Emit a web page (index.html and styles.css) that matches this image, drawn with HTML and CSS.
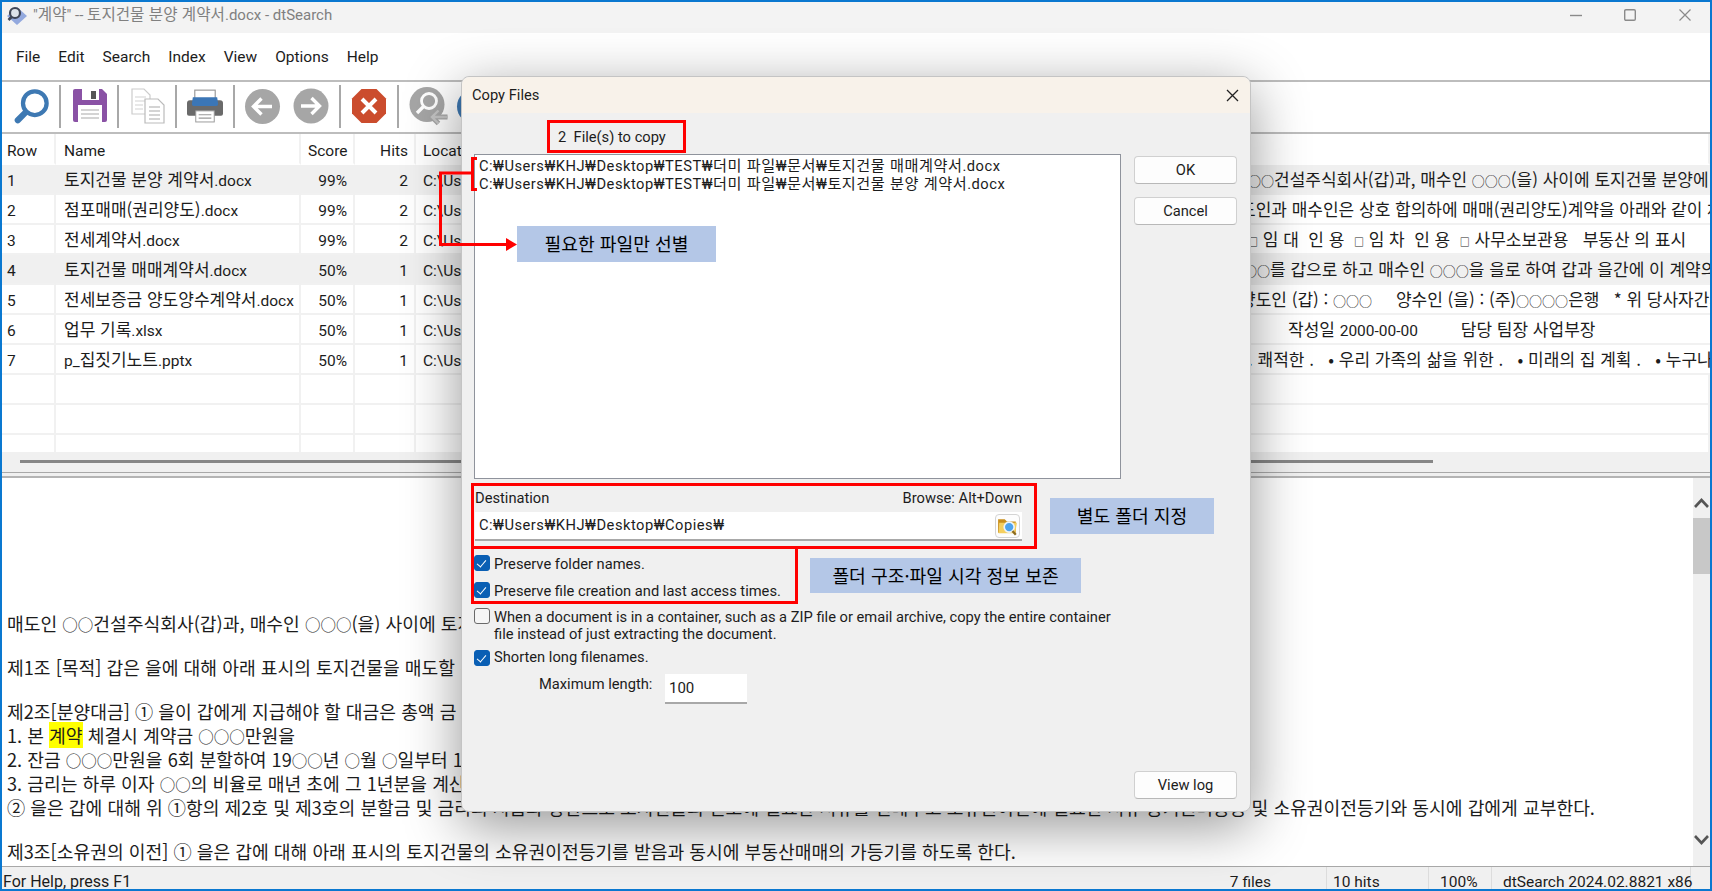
FILE: index.html
```html
<!DOCTYPE html>
<html lang="ko">
<head>
    <meta charset="UTF-8">
    <title>dtSearch - Copy Files</title>
    <link rel="stylesheet" href="styles.css">
</head>
<body>
<div class="window">

    <div class="titlebar">
        <svg class="app-icon" width="20" height="19" viewBox="0 0 20 19">
            <path d="M10 1L20 10L10 19L0 10Z" fill="#93a9de"/>
            <circle cx="8" cy="7" r="5" fill="#dde3ea" stroke="#3f4656" stroke-width="2.2"/>
            <line x1="4.500" y1="11" x2="1.500" y2="14" stroke="#3f4656" stroke-width="2.600"/>
        </svg>
        <span class="title-text">"<span class="ko">계약</span>" -- <span class="ko">토지건물 분양 계약서</span>.docx - dtSearch</span>
        <div class="win-controls">
            <svg width="12" height="12" viewBox="0 0 12 12"><line x1="0" y1="6.5" x2="12" y2="6.5" stroke="#8a8a8a" stroke-width="1.4"/></svg>
            <svg class="win-max" width="12" height="12" viewBox="0 0 12 12"><rect x="0.7" y="0.7" width="10.6" height="10.6" rx="1.2" fill="none" stroke="#8a8a8a" stroke-width="1.4"/></svg>
            <svg class="win-close" width="12" height="12" viewBox="0 0 12 12"><path d="M0.5 0.5L11.5 11.5M11.5 0.5L0.5 11.5" stroke="#8a8a8a" stroke-width="1.2"/></svg>
        </div>
    </div>

    <div class="menubar">
        <span>File</span><span>Edit</span><span>Search</span><span>Index</span><span>View</span><span>Options</span><span>Help</span>
    </div>

    <div class="toolbar">
        <svg width="35" height="37" viewBox="0 0 37 37">
            <circle cx="22" cy="15" r="12.5" fill="none" stroke="#3e79b3" stroke-width="4.5"/>
            <line x1="12" y1="25" x2="4" y2="33" stroke="#3e79b3" stroke-width="6.5" stroke-linecap="round"/>
        </svg>
        <i class="sep"></i>
        <svg width="36" height="34" viewBox="-2 0 36 34">
            <path d="M2 0H29L34 5V31a2 2 0 0 1-2 2H2a2 2 0 0 1-2-2V2a2 2 0 0 1 2-2z" fill="#8a52a5"/>
            <rect x="9" y="0" width="17" height="11" fill="#fff"/>
            <rect x="18" y="2" width="5" height="8" fill="#555"/>
            <rect x="5" y="16" width="24" height="17" fill="#fff"/>
            <path d="M8 21H26M8 25H26M8 29H26" stroke="#aaa" stroke-width="1.2"/>
        </svg>
        <i class="sep"></i>
        <svg width="36" height="36" viewBox="-2 0 36 36">
            <path d="M1 1H13L19 7V26H1Z" fill="#fff" stroke="#ccc" stroke-width="1.2"/>
            <path d="M4 9H15M4 13H15M4 17H12M4 21H12" stroke="#d2d2d2" stroke-width="1.2"/>
            <path d="M14 11H27L33 17V35H14Z" fill="#fff" stroke="#bbb" stroke-width="1.2"/>
            <path d="M18 19H29M18 23H29M18 27H29M18 31H29" stroke="#aaa" stroke-width="1.2"/>
        </svg>
        <i class="sep"></i>
        <svg width="36" height="34" viewBox="0 0 37 34">
            <rect x="8" y="0.7" width="21" height="12" fill="#fff" stroke="#999" stroke-width="1.2"/>
            <path d="M3 11H34a3 3 0 0 1 3 3V25a2 2 0 0 1-2 2H2a2 2 0 0 1-2-2V14a3 3 0 0 1 3-3z" fill="#6a6a6a"/>
            <path d="M6 8H31L32 15a2 2 0 0 1-2 2H7a2 2 0 0 1-2-2Z" fill="#3b76b6"/>
            <rect x="9" y="22" width="19" height="11.4" fill="#fff" stroke="#999" stroke-width="1"/>
            <path d="M12 26H25M12 29.500H25" stroke="#999" stroke-width="1.2"/>
        </svg>
        <i class="sep"></i>
        <svg width="35" height="35" viewBox="0 0 35 35">
            <circle cx="17.500" cy="17.500" r="17.500" fill="#a6a6a6"/>
            <path d="M27 17.500H9M16.500 9.500L8.500 17.500L16.500 25.500" fill="none" stroke="#fff" stroke-width="3.4"/>
        </svg>
        <svg class="tool-next" width="36" height="36" viewBox="0 0 36 36">
            <circle cx="18" cy="18" r="17.500" fill="#a6a6a6"/>
            <path d="M8 18H26M18.500 10L26.500 18L18.500 26" fill="none" stroke="#fff" stroke-width="3.4"/>
        </svg>
        <i class="sep"></i>
        <svg width="36" height="36" viewBox="0 0 36 36">
            <path d="M10.500 1H25.500L35 10.500V25.500L25.500 35H10.500L1 25.500V10.500Z" fill="#cb4c2d"/>
            <path d="M11 11L25 25M25 11L11 25" stroke="#fff" stroke-width="4"/>
        </svg>
        <i class="sep"></i>
        <svg width="39" height="38" viewBox="0 0 39 38">
            <circle cx="18" cy="17.500" r="17.500" fill="#a6a6a6"/>
            <circle cx="20" cy="14" r="7.500" fill="none" stroke="#fff" stroke-width="2.800"/>
            <line x1="14.500" y1="19.500" x2="8" y2="26" stroke="#fff" stroke-width="3.400"/>
            <path d="M38.500 30H23M29.500 23.500L23 30L29.500 36.500" fill="none" stroke="#a6a6a6" stroke-width="5"/>
            <path d="M38.500 30H23M29.500 23.500L23 30L29.500 36.500" fill="none" stroke="#c4c4c4" stroke-width="2.400"/>
        </svg>
        <svg class="tool-more" width="35" height="35" viewBox="0 0 35 35"><circle cx="17.500" cy="17.500" r="17.500" fill="#3e79b3"/></svg>
    </div>

    <div class="results">
        <table>
            <colgroup>
                <col class="col-row"><col class="col-name"><col class="col-score"><col class="col-hits"><col class="col-loc"><col>
            </colgroup>
            <thead>
                <tr><th>Row</th><th>Name</th><th class="num">Score</th><th class="num">Hits</th><th>Location</th><th></th></tr>
            </thead>
            <tbody>
                <tr class="shade"><td>1</td><td><span class="ko">토지건물 분양 계약서</span>.docx</td><td class="num">99%</td><td class="num">2</td><td>C:\Users\KHJ\Desktop\TEST</td><td class="hit hit-1"><span class="o">○○</span>건설주식회사(갑)과, 매수인 <span class="o">○○○</span>(을) 사이에 토지건물 분양에 관하여</td></tr>
                <tr><td>2</td><td><span class="ko">점포매매(권리양도)</span>.docx</td><td class="num">99%</td><td class="num">2</td><td>C:\Users\KHJ\Desktop\TEST</td><td class="hit hit-2">도인과 매수인은 상호 합의하에 매매(권리양도)계약을 아래와 같이 체결한다</td></tr>
                <tr><td>3</td><td><span class="ko">전세계약서</span>.docx</td><td class="num">99%</td><td class="num">2</td><td>C:\Users\KHJ\Desktop\TEST</td><td class="hit hit-3"><small>□</small> 임 대  인 용  <small>□</small> 임 차  인 용  <small>□</small> 사무소보관용   부동산 의 표시</td></tr>
                <tr class="shade"><td>4</td><td><span class="ko">토지건물 매매계약서</span>.docx</td><td class="num">50%</td><td class="num">1</td><td>C:\Users\KHJ\Desktop\TEST</td><td class="hit hit-4"><span class="o">○○</span>를 갑으로 하고 매수인 <span class="o">○○○</span>을 을로 하여 갑과 을간에 이 계약의 내용</td></tr>
                <tr><td>5</td><td><span class="ko">전세보증금 양도양수계약서</span>.docx</td><td class="num">50%</td><td class="num">1</td><td>C:\Users\KHJ\Desktop\TEST</td><td class="hit hit-5">양도인 (갑) : <span class="o">○○○</span>     양수인 (을) : (주)<span class="o">○○○○</span>은행   * 위 당사자간의</td></tr>
                <tr><td>6</td><td><span class="ko">업무 기록</span>.xlsx</td><td class="num">50%</td><td class="num">1</td><td>C:\Users\KHJ\Desktop\TEST</td><td class="hit hit-6">작성일 <span class="lat">2000-00-00</span>         담당 팀장 사업부장</td></tr>
                <tr><td>7</td><td>p_<span class="ko">집짓기노트</span>.pptx</td><td class="num">50%</td><td class="num">1</td><td>C:\Users\KHJ\Desktop\TEST</td><td class="hit hit-7">. 쾌적한 .   • 우리 가족의 삶을 위한 .   • 미래의 집 계획 .   • 누구나</td></tr>
                <tr><td></td><td></td><td></td><td></td><td></td><td></td></tr>
                <tr><td></td><td></td><td></td><td></td><td></td><td></td></tr>
                <tr><td></td><td></td><td></td><td></td><td></td><td></td></tr>
            </tbody>
        </table>
    </div>
    <div class="hscroll"><div class="hscroll-thumb"></div></div>
    <div class="splitter"></div>

    <div class="preview">
        <div class="preview-text">
            <p>매도인 <span class="o">○○</span>건설주식회사(갑)과, 매수인 <span class="o">○○○</span>(을) 사이에 토지건물 분양에 관하여 다음과 같이 계약을 체결한다.</p>
            <p>제1조 [목적] 갑은 을에 대해 아래 표시의 토지건물을 매도할 것을 약정하고 을은 이를 매수한다.</p>
            <p>제2조[분양대금] ① 을이 갑에게 지급해야 할 대금은 총액 금 <span class="o">○○○</span>만원으로 하고 다음과 같이 지급한다.<br>
            1. 본 <mark>계약</mark> 체결시 계약금 <span class="o">○○○</span>만원을<br>
            2. 잔금 <span class="o">○○○</span>만원을 6회 분할하여 19<span class="o">○○</span>년 <span class="o">○</span>월 <span class="o">○</span>일부터 19<span class="o">○○</span>년 <span class="o">○</span>월 <span class="o">○</span>일까지 지급한다.<br>
            3. 금리는 하루 이자 <span class="o">○○</span>의 비율로 매년 초에 그 1년분을 계산하여 지급한다.<br>
            ② 을은 갑에 대해 위 ①항의 제2호 및 제3호의 분할금 및 금리의 지급과 상환으로 토지건물의 인도에 필요한 서류를 건네주고 소유권이전에 필요한 서류 등기권리증등 및 소유권이전등기와 동시에 갑에게 교부한다.</p>
            <p>제3조[소유권의 이전] ① 을은 갑에 대해 아래 표시의 토지건물의 소유권이전등기를 받음과 동시에 부동산매매의 가등기를 하도록 한다.</p>
        </div>
        <div class="vscroll">
            <svg class="vscroll-up" width="17" height="12" viewBox="0 0 17 12"><path d="M2 10L8.500 3L15 10" fill="none" stroke="#555" stroke-width="2.600"/></svg>
            <div class="vscroll-thumb"></div>
            <svg class="vscroll-down" width="17" height="12" viewBox="0 0 17 12"><path d="M2 2L8.500 9L15 2" fill="none" stroke="#555" stroke-width="2.600"/></svg>
        </div>
    </div>

    <div class="statusbar">
        <span class="status-help">For Help, press F1</span>
        <span class="status-files">7 files</span>
        <span class="status-hits">10 hits</span>
        <span class="status-zoom">100%</span>
        <span class="status-ver">dtSearch 2024.02.8821 x86</span>
    </div>

    <div class="dialog">
        <div class="dialog-title">
            <span>Copy Files</span>
            <svg width="13" height="13" viewBox="0 0 13 13"><path d="M1 1L12 12M12 1L1 12" stroke="#222" stroke-width="1.300"/></svg>
        </div>
        <div class="dialog-body">
            <div class="dialog-main">
                <div class="count-row"><span class="count-box">2&nbsp; File(s) to copy</span></div>
                <div class="file-list">
                    <div>C:₩Users₩KHJ₩Desktop₩TEST₩<span class="ko">더미 파일</span>₩<span class="ko">문서</span>₩<span class="ko">토지건물 매매계약서</span>.docx</div>
                    <div>C:₩Users₩KHJ₩Desktop₩TEST₩<span class="ko">더미 파일</span>₩<span class="ko">문서</span>₩<span class="ko">토지건물 분양 계약서</span>.docx</div>
                </div>
                <div class="dest-group">
                    <div class="dest-labels"><span>Destination</span><span>Browse: Alt+Down</span></div>
                    <div class="dest-input">
                        <span class="dest-path">C:₩Users₩KHJ₩Desktop₩Copies₩</span>
                        <span class="browse-btn">
                            <svg width="21" height="20" viewBox="0 0 19 18">
                                <path d="M1 3H7L9 5H17V15H1Z" fill="#c98f1c"/>
                                <path d="M2 6H18L16.500 15.500H1.500Z" fill="#f4cf5f"/>
                                <circle cx="11" cy="10" r="4.500" fill="#4da3ee" stroke="#eaf3fb" stroke-width="1.500"/>
                                <line x1="14" y1="13.500" x2="17" y2="17" stroke="#8a6a20" stroke-width="2"/>
                            </svg>
                        </span>
                    </div>
                </div>
                <div class="preserve-group">
                    <label class="check-row"><span class="check on"></span>Preserve folder names.</label>
                    <label class="check-row"><span class="check on"></span>Preserve file creation and last access times.</label>
                </div>
                <label class="check-row check-wrap"><span class="check"></span><span>When a document is in a container, such as a ZIP file or email archive, copy the entire container<br>file instead of just extracting the document.</span></label>
                <label class="check-row check-short"><span class="check on"></span>Shorten long filenames.</label>
                <div class="maxlen-row">
                    <span class="maxlen-label">Maximum length:</span>
                    <span class="maxlen-input">100</span>
                </div>
            </div>
            <div class="dialog-buttons">
                <button>OK</button>
                <button>Cancel</button>
                <button class="btn-log">View log</button>
            </div>
        </div>
        <div class="note note-select">필요한 파일만 선별</div>
        <div class="note note-folder">별도 폴더 지정</div>
        <div class="note note-keep">폴더 구조·파일 시각 정보 보존</div>
    </div>

    <svg class="callout-lines" width="1712" height="891" viewBox="0 0 1712 891">
        <path d="M477 158.500H472.500V189.500H477" fill="none" stroke="#f00" stroke-width="3"/>
        <path d="M472 173H440.500V244.500H508" fill="none" stroke="#f00" stroke-width="3"/>
        <path d="M506 238L517 244.500L506 251Z" fill="#f00"/>
    </svg>
</div>
</body>
</html>
```

FILE: styles.css
```css
body {
    margin: 0;
    background-color: #fff;
    font-family: Roboto, "Noto Sans CJK KR", sans-serif;
    font-size: 15.5px;
    color: #1c1c1c;
}

.ko {
    font-family: "Noto Sans CJK KR", sans-serif;
    font-size: 17px;
    line-height: 1;
}

.o {
    font-family: "Noto Sans CJK KR", sans-serif;
    font-size: 15.5px;
    line-height: 1;
}

.lat {
    font-family: Roboto, sans-serif;
    font-size: 15.5px;
    line-height: 1;
}

.window {
    position: relative;
    width: 1712px;
    height: 891px;
    box-sizing: border-box;
    border: 2px solid #0a78d0;
    display: flex;
    flex-direction: column;
    overflow: hidden;
}

/* title + menu */
.titlebar {
    height: 31px;
    flex: none;
    box-sizing: border-box;
    background-color: #f3f3f3;
    display: flex;
    align-items: center;
    padding: 0 19px 5px 5px;
    color: #808080;
    font-size: 15px;
}
.title-text {
    margin-left: 6px;
    white-space: pre;
}
.title-text .ko {
    font-size: 15.6px;
}
.win-controls {
    margin-left: auto;
    display: flex;
    align-items: center;
}
.win-max {
    margin-left: 42px;
}
.win-close {
    margin-left: 43px;
}

.menubar {
    height: 49px;
    flex: none;
    box-sizing: border-box;
    border-bottom: 2px solid #bdbdbd;
    display: flex;
    align-items: center;
    gap: 18px;
    padding-left: 14px;
}

.toolbar {
    height: 52px;
    flex: none;
    box-sizing: border-box;
    border-bottom: 2px solid #bdbdbd;
    display: flex;
    align-items: center;
    padding: 0 0 2px 12px;
}
.toolbar svg {
    overflow: visible;
}
.sep {
    width: 2px;
    height: 43px;
    background-color: #a8a8a8;
    margin: 0 10px;
}
.tool-next {
    margin-left: 13px;
}
.tool-more {
    margin-left: 9px;
}

/* results list */
.results {
    height: 318px;
    flex: none;
    overflow: hidden;
}
table {
    width: 1708px;
    table-layout: fixed;
    border-collapse: separate;
    border-spacing: 0;
}
.col-row { width: 54px; }
.col-name { width: 245px; }
.col-score { width: 54px; }
.col-hits { width: 61px; }
.col-loc { width: 824px; }

th, td {
    height: 24px;
    padding: 4px 7px 0;
    line-height: 24px;
    font-weight: normal;
    text-align: left;
    white-space: pre;
    overflow: hidden;
    border-right: 2px solid #f1f1f1;
    border-bottom: 2px solid #f1f1f1;
}
th {
    padding-top: 5px;
    border-bottom-color: transparent;
}
td:first-child, th:first-child {
    padding-left: 5px;
}
td:nth-child(2), th:nth-child(2) {
    padding-left: 8px;
}
.num {
    text-align: right;
    padding-right: 6px;
}
.shade td {
    background-color: #f0f0f0;
    border-right-color: #f0f0f0;
}
.hit {
    font-family: "Noto Sans CJK KR", sans-serif;
    font-size: 17px;
    height: 27px;
    line-height: 27px;
    padding: 0 0 1px;
    border-right: 0;
}
.hit .o {
    font-size: 13px;
}
.hit small {
    font-size: 10px;
    font-weight: bold;
    line-height: 1;
}
.hit-1 { padding-left: 8px; }
.hit-2 { padding-left: 0; }
.hit-3 { padding-left: 8px; }
.hit-4 { padding-left: 4px; }
.hit-5 { padding-left: 0; }
.hit-6 { padding-left: 48px; }
.hit-7 { padding-left: 8px; }

.hscroll {
    height: 20px;
    flex: none;
    background-color: #f0f0f0;
    padding-left: 18px;
    box-sizing: border-box;
    padding-top: 8px;
}
.hscroll-thumb {
    width: 1413px;
    height: 3px;
    background-color: #868686;
}
.splitter {
    height: 6px;
    flex: none;
    box-sizing: border-box;
    background-color: #f0f0f0;
    border-top: 1px solid #a8a8a8;
    border-bottom: 2px solid #b4b4b4;
}

/* bottom preview */
.preview {
    flex: 1;
    display: flex;
    min-height: 0;
}
.preview-text {
    flex: 1;
    padding: 133px 0 0 5px;
    font-family: "Noto Sans CJK KR", sans-serif;
    font-size: 18.2px;
    line-height: 24px;
    white-space: nowrap;
    overflow: hidden;
}
.preview-text p {
    margin: 0 0 20px;
}
mark {
    background-color: #ffff00;
    color: inherit;
}
.vscroll {
    width: 17px;
    flex: none;
    background-color: #f0f0f0;
    display: flex;
    flex-direction: column;
}
.vscroll-up {
    margin-top: 19px;
}
.vscroll-thumb {
    height: 56px;
    margin-top: 9px;
    background-color: #c8c8c8;
}
.vscroll-down {
    margin-top: auto;
    margin-bottom: 20px;
}

.statusbar {
    height: 23px;
    flex: none;
    box-sizing: border-box;
    border-top: 1px solid #a8a8a8;
    background-color: #f0f0f0;
    display: flex;
    overflow: hidden;
    line-height: 30px;
    white-space: nowrap;
}
.statusbar span {
    box-sizing: border-box;
    flex: none;
    border-right: 1px solid #dcdcdc;
}
.statusbar .status-help {
    width: 1215px;
    padding-left: 1px;
    border-right: 0;
    font-size: 16px;
}
.status-files { width: 110px; text-align: right; padding-right: 55px; }
.status-hits { width: 102px; padding-left: 6px; }
.status-zoom { width: 63px; padding-left: 11px; }
.status-ver { width: 199px; padding-left: 11px; }

/* copy dialog */
.dialog {
    position: absolute;
    left: 459px;
    top: 74px;
    width: 790px;
    height: 736px;
    box-sizing: border-box;
    background-color: #f0f0f0;
    border: 1px solid #c4c4c4;
    border-radius: 8px;
    box-shadow: 0 14px 56px rgba(0, 0, 0, 0.42);
    font-size: 14.7px;
}
.dialog-title {
    height: 36px;
    background-color: #f8f2ea;
    border-radius: 8px 8px 0 0;
    display: flex;
    align-items: center;
    justify-content: space-between;
    padding: 0 11px 0 10px;
}
.dialog-body {
    display: grid;
    grid-template-columns: 647px 103px;
    column-gap: 13px;
    padding-left: 12px;
    height: 699px;
}
.dialog-main {
    display: flex;
    flex-direction: column;
    align-items: flex-start;
}
.count-row {
    height: 41px;
}
.count-box {
    display: block;
    box-sizing: border-box;
    width: 139px;
    height: 33px;
    margin: 7px 0 0 73px;
    border: 3px solid #f00;
    padding-left: 8px;
    line-height: 29px;
}
.file-list {
    width: 647px;
    height: 325px;
    box-sizing: border-box;
    background-color: #fff;
    border: 1px solid #8f939c;
    padding: 2px 4px;
    line-height: 18px;
    letter-spacing: 0.5px;
    white-space: nowrap;
}
.file-list .ko {
    font-size: 15.2px;
}

.dest-group {
    box-sizing: border-box;
    width: 566px;
    height: 66px;
    margin: 4px 0 0 -3px;
    border: 3px solid #f00;
    padding: 0 12px 0 1px;
}
.dest-labels {
    height: 26px;
    box-sizing: border-box;
    padding-bottom: 2px;
    display: flex;
    align-items: center;
    justify-content: space-between;
}
.dest-input {
    height: 29px;
    box-sizing: border-box;
    background-color: #fff;
    border-bottom: 2px solid #a8a8a8;
    display: flex;
    align-items: center;
    justify-content: space-between;
    padding: 0 2px 2px 4px;
}
.dest-path {
    letter-spacing: 0.5px;
}
.browse-btn {
    box-sizing: border-box;
    width: 25px;
    height: 24px;
    margin-top: 3px;
    background-color: #fdfdfd;
    border: 1px solid #d4d4d4;
    border-radius: 4px;
    display: flex;
    align-items: center;
    justify-content: center;
}

.preserve-group {
    box-sizing: border-box;
    width: 327px;
    height: 55px;
    margin-left: -3px;
    border: 3px solid #f00;
    border-top: 0;
    padding-top: 7px;
    display: flex;
    flex-direction: column;
    gap: 10px;
}
.check-row {
    display: flex;
    align-items: center;
    gap: 4px;
    height: 17px;
    line-height: 17px;
    white-space: nowrap;
}
.check {
    box-sizing: border-box;
    width: 16px;
    height: 16px;
    flex: none;
    margin-top: -3px;
    border-radius: 3px;
    border: 1px solid #6a6a6a;
    background-color: #f6f6f6;
    position: relative;
}
.check.on {
    background-color: #0a5fb4;
    border-color: #0a5fb4;
}
.check.on::after {
    content: "";
    position: absolute;
    left: 4px;
    top: 2px;
    width: 4px;
    height: 8px;
    border: solid #fff;
    border-width: 0 1.4px 1.4px 0;
    transform: rotate(40deg);
}
.check-wrap {
    height: 34px;
    margin-top: 5px;
    align-items: flex-start;
}
.check-wrap .check {
    margin-top: -1px;
}
.check-short {
    margin-top: 6px;
}
.check-short .check {
    margin-top: 0;
}
.maxlen-row {
    display: flex;
    align-items: flex-start;
    margin-top: 8px;
    padding-left: 65px;
}
.maxlen-label {
    width: 126px;
    line-height: 20px;
}
.maxlen-input {
    box-sizing: border-box;
    width: 82px;
    height: 30px;
    background-color: #fff;
    border-bottom: 2px solid #a8a8a8;
    padding: 1px 0 0 4px;
    line-height: 26px;
    font-size: 15px;
}

.dialog-buttons {
    display: flex;
    flex-direction: column;
    padding-top: 43px;
    padding-bottom: 13px;
}
button {
    box-sizing: border-box;
    width: 103px;
    height: 28px;
    margin-bottom: 13px;
    background-color: #fdfdfd;
    border: 1px solid #d0d0d0;
    border-bottom-color: #b8b8b8;
    border-radius: 4px;
    font-family: inherit;
    font-size: 14.7px;
    color: inherit;
}
.btn-log {
    margin-top: auto;
    margin-bottom: 0;
}

/* blue callouts drawn on top of the dialog */
.note {
    position: absolute;
    box-sizing: border-box;
    padding-bottom: 2px;
    display: flex;
    align-items: center;
    justify-content: center;
    background-color: #b4c7e7;
    color: #000;
    font-family: "Noto Sans CJK KR", sans-serif;
    font-size: 18.2px;
}
.note-select { left: 55px; top: 149px; width: 199px; height: 36px; }
.note-folder { left: 588px; top: 421px; width: 164px; height: 36px; }
.note-keep { left: 348px; top: 481px; width: 271px; height: 35px; }

.callout-lines {
    position: absolute;
    left: -2px;
    top: -2px;
    pointer-events: none;
}
```
